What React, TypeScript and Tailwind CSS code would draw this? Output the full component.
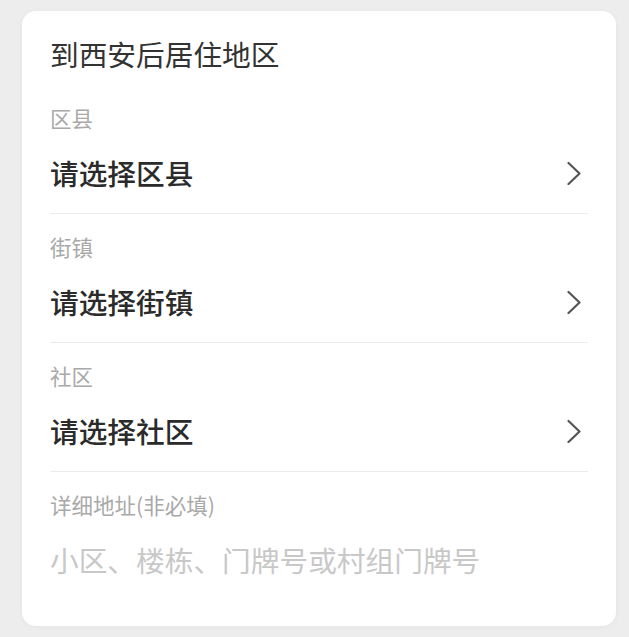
import React from 'react'

const font = { fontFamily: '"Noto Sans CJK SC", "Noto Sans", sans-serif' }

function Chevron() {
  return (
    <svg width="16" height="24" viewBox="0 0 16 24" className="mr-[6px]">
      <polyline points="2.5,2 13.5,12.5 2.5,23" fill="none" stroke="#555" strokeWidth="2.2" strokeLinecap="round" strokeLinejoin="round" />
    </svg>
  )
}

function SelectRow({ label, value }: { label: string; value: string }) {
  return (
    <div>
      <div className="h-[66px] flex items-center text-[21.5px] text-[#a9a9a9]">{label}</div>
      <div className="h-[44px] flex items-center justify-between">
        <span className="text-[28.7px] font-medium text-[#2b2b2b] leading-[28px]">{value}</span>
        <Chevron />
      </div>
      <div className="h-[18px]" />
      <div className="h-px bg-[#ebebeb]" />
    </div>
  )
}

export default function App() {
  return (
    <div className="min-h-screen bg-[#ededed] pt-[11px] pl-[22px]" style={font}>
      <div className="w-[594px] h-[615px] bg-white rounded-[14px] shadow-[0_1px_6px_rgba(0,0,0,0.04)] px-[28px]">
        <div className="pt-[29px] pb-[17px] leading-[28px] text-[28.7px] text-[#333]">到西安后居住地区</div>
        <SelectRow label="区县" value="请选择区县" />
        <SelectRow label="街镇" value="请选择街镇" />
        <SelectRow label="社区" value="请选择社区" />
        <div>
          <div className="h-[66px] flex items-center text-[21.5px] text-[#a9a9a9]">详细地址(非必填)</div>
          <div className="h-[44px] flex items-center text-[28.7px] text-[#c8c8c8]">小区、楼栋、门牌号或村组门牌号</div>
        </div>
      </div>
    </div>
  )
}
